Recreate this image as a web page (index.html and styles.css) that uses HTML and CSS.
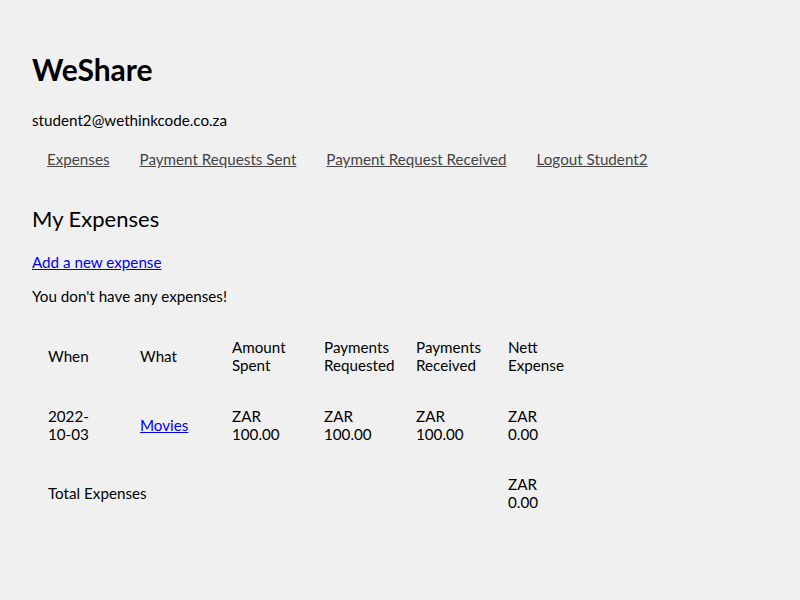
FILE: index.html
```html
<!DOCTYPE html>
<html>
<head>
<meta charset="utf-8">
<title>WeShare</title>
<link rel="stylesheet" href="styles.css">
</head>
<body>
<header class="site-header">
  <h1 class="brand">WeShare</h1>
  <div class="user-email">student2@wethinkcode.co.za</div>
  <ul class="nav">
    <li><a href="#">Expenses</a></li>
    <li><a href="#">Payment Requests Sent</a></li>
    <li><a href="#">Payment Request Received</a></li>
    <li><a href="#">Logout Student2</a></li>
  </ul>
</header>
<main>
  <h2 class="section-title">My Expenses</h2>
  <p class="add-link"><a href="#">Add a new expense</a></p>
  <p class="empty-note">You don't have any expenses!</p>
  <table class="expenses">
    <colgroup>
      <col class="col"><col class="col"><col class="col"><col class="col"><col class="col"><col class="col">
    </colgroup>
    <thead>
      <tr>
        <th>When</th>
        <th>What</th>
        <th>Amount Spent</th>
        <th>Payments Requested</th>
        <th>Payments Received</th>
        <th>Nett Expense</th>
      </tr>
    </thead>
    <tbody>
      <tr>
        <td>2022-10-03</td>
        <td><a href="#">Movies</a></td>
        <td>ZAR 100.00</td>
        <td>ZAR 100.00</td>
        <td>ZAR 100.00</td>
        <td>ZAR 0.00</td>
      </tr>
      <tr>
        <td colspan="5">Total Expenses</td>
        <td>ZAR 0.00</td>
      </tr>
    </tbody>
  </table>
</main>
</body>
</html>
```
FILE: styles.css
```css
html { background: #f0f0f0; }
body {
  margin: 0;
  padding: 32px;
  font-family: Lato, "Liberation Sans", sans-serif;
  font-size: 15.2px;
  color: #000;
}
.brand {
  margin: 17px 0 0;
  font-size: 30px;
  line-height: 40px;
  font-weight: 700;
}
.user-email {
  margin-top: 22px;
  line-height: 18px;
}
.nav {
  list-style: none;
  margin: 21px 0 0;
  padding: 0 0 0 15px;
  display: flex;
  gap: 30px;
  line-height: 18px;
}
.nav a { color: #444; }
.section-title {
  margin: 36px 0 0;
  font-size: 22px;
  line-height: 30px;
  font-weight: 400;
}
.add-link { margin: 19px 0 0; line-height: 18px; }
.add-link a, .expenses a { color: #0000ee; }
.empty-note { margin: 16px 0 0; line-height: 18px; }
.expenses {
  margin-top: 17px;
  width: 552px;
  border-collapse: collapse;
  table-layout: fixed;
}
.expenses .col { width: 92px; }
.expenses th, .expenses td {
  padding: 16px;
  text-align: left;
  font-weight: 400;
  line-height: 18px;
  vertical-align: middle;
  overflow: visible;
}
.expenses tbody tr:first-child td { padding-top: 17px; }
```
